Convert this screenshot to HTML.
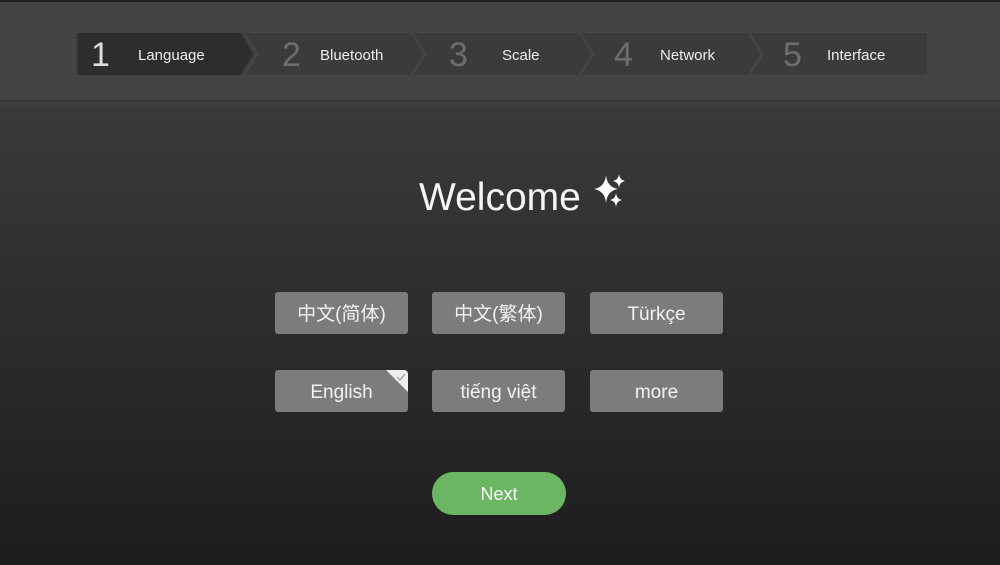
<!DOCTYPE html>
<html><head><meta charset="utf-8"><style>
html,body{margin:0;padding:0}
body{width:1000px;height:565px;overflow:hidden;position:relative;font-family:"Liberation Sans","Noto Sans CJK SC",sans-serif;background:linear-gradient(#3e3e3e 100px,#3a3a3a 110px,#1d1d1d 565px);}
.hdr{position:absolute;left:0;top:0;width:1000px;height:101px;background:#444;border-bottom:1px solid #333;border-top:2px solid #222;box-sizing:border-box}
svg.bar{position:absolute;left:0;top:0}
.num{position:absolute;top:36px;font-size:34px;color:#6e6e6e;font-weight:300}
.lab{position:absolute;top:47px;font-size:15px;color:#eee}
.title{position:absolute;left:419px;top:176px;font-size:39px;color:#f4f4f4}
.btn{position:absolute;width:133px;height:42px;background:#7c7c7c;border-radius:3px;color:#f2f2f2;font-size:19px;text-align:center;line-height:45px}
.next{position:absolute;left:432px;top:472px;width:134px;height:43px;border-radius:22px;background:#6bb663;color:#fff;font-size:18px;text-align:center;line-height:45px}
</style></head><body>
<div class="hdr"></div>
<svg class="bar" width="1000" height="100">
<rect x="76" y="33" width="851" height="42" fill="#3b3b3b"/>
<polygon points="78,33 240,33 253,54 240,75 78,75" fill="#2d2d2d"/>
<polyline points="412,33 425,54 412,75" fill="none" stroke="#444" stroke-width="3"/>
<polyline points="580,33 593,54 580,75" fill="none" stroke="#444" stroke-width="3"/>
<polyline points="749,33 762,54 749,75" fill="none" stroke="#444" stroke-width="3"/>
<polyline points="244,33 257,54 244,75" fill="none" stroke="#444" stroke-width="3"/>
</svg>
<svg style="position:absolute;left:0;top:0" width="1000" height="230">
<g fill="#fff">
<path d="M606 175 Q607 187 618 189 Q607 191 606 203 Q605 191 594 189 Q605 187 606 175Z"/>
<path d="M619 174 Q619.5 180 625 181 Q619.5 182 619 188 Q618.5 182 613 181 Q618.5 180 619 174Z"/>
<path d="M616 193 Q616.5 199 622 200 Q616.5 201 616 207 Q615.5 201 610 200 Q615.5 199 616 193Z"/>
</g>
</svg>
<div class="num" style="left:91px;color:#ddd">1</div><div class="lab" style="left:138px">Language</div>
<div class="num" style="left:282px">2</div><div class="lab" style="left:320px">Bluetooth</div>
<div class="num" style="left:449px">3</div><div class="lab" style="left:502px">Scale</div>
<div class="num" style="left:614px">4</div><div class="lab" style="left:660px">Network</div>
<div class="num" style="left:783px">5</div><div class="lab" style="left:827px">Interface</div>
<div class="title">Welcome</div>
<div class="btn" style="left:275px;top:292px">中文(简体)</div>
<div class="btn" style="left:432px;top:292px">中文(繁体)</div>
<div class="btn" style="left:590px;top:292px">Türkçe</div>
<div class="btn" style="left:275px;top:370px">English
<svg style="position:absolute;right:0;top:0" width="22" height="22"><polygon points="0,0 19,0 22,3 22,22" fill="#eee"/><polyline points="11,7 14,10 19,4" fill="none" stroke="#999" stroke-width="1.2"/></svg></div>
<div class="btn" style="left:432px;top:370px">tiếng việt</div>
<div class="btn" style="left:590px;top:370px">more</div>
<div class="next">Next</div>
</body></html>
